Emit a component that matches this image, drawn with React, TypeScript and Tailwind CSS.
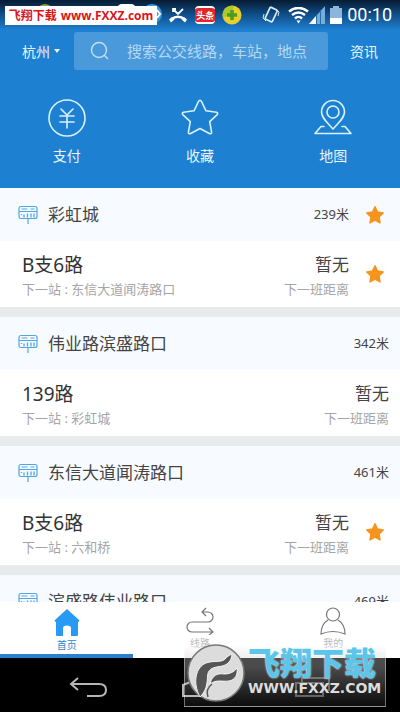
import type { ReactNode } from 'react'

interface Station {
  name: string
  distance: string
  starred: boolean
  line?: { name: string; next: string; starred: boolean }
}

const STATIONS: Station[] = [
  { name: '彩虹城', distance: '239米', starred: true, line: { name: 'B支6路', next: '东信大道闻涛路口', starred: true } },
  { name: '伟业路滨盛路口', distance: '342米', starred: false, line: { name: '139路', next: '彩虹城', starred: false } },
  { name: '东信大道闻涛路口', distance: '461米', starred: false, line: { name: 'B支6路', next: '六和桥', starred: true } },
  { name: '滨盛路伟业路口', distance: '469米', starred: false },
]

// ── Icons ──

function StopIcon() {
  return (
    <svg viewBox="0 0 20 20" className="h-5 w-5 flex-none" fill="none" stroke="#4fa6e6" strokeWidth="1.200">
      <rect x="1" y="1.500" width="18" height="12" rx="2" />
      <path d="M1 6.500h18M3.500 4h6M12.500 4h4M10 13.500V19" />
      <path d="M6 9.500v3M9.500 8.500v4M13 8.500v4M16 8.500v4M3.500 9v1" strokeWidth="1.300" />
    </svg>
  )
}

function StarButton({ label }: { label: string }) {
  return (
    <button type="button" aria-label={label} className="ml-4 h-5 w-5 flex-none">
      <svg viewBox="0 0 20 20" className="h-5 w-5" fill="#f7941d" stroke="#f7941d" strokeWidth="1.500" strokeLinejoin="round">
        <path d="M10 1.800l2.500 5.300 5.700.8-4.200 4.100 1 5.900-5-2.800-5 2.800 1-5.900L1.800 7.900l5.700-.8z" />
      </svg>
    </button>
  )
}

// ── Status bar ──

function StatusBar() {
  return (
    <div className="flex h-[30px] items-center justify-end bg-linear-to-b from-[#061c33] via-[#10508c] via-50% to-[#1e80d1] pr-2 text-white">
      <svg viewBox="0 0 18 16" className="mr-2 h-4 w-[18px]" fill="none" stroke="#fff">
        <path d="M4 5V2h3M4 2l5 5 5-5" strokeWidth="1.800" />
        <path d="M3 12c3-3 9-3 12 0" strokeWidth="2.500" />
        <path d="M0 12.500l3-2.500 2.500 2.500L2 15.500zM18 12.500L15 10l-2.500 2.500 3.500 3z" fill="#fff" stroke="none" />
      </svg>
      <span className="mr-[7px] flex h-[18px] w-5 items-center justify-center rounded-sm border-y-2 border-white bg-[#e32428] text-[9px] leading-none font-bold">头条</span>
      <svg viewBox="0 0 20 20" className="mr-5 h-5 w-5">
        <circle cx="10" cy="10" r="9.500" fill="#e9cf2c" />
        <path d="M1 13A9.500 9.500 0 0 1 12 1c-1 5-5 9-11 12z" fill="#a9c92d" />
        <path d="M10 5v10M5 10h10" stroke="#4c9a20" strokeWidth="3.500" />
      </svg>
      <svg viewBox="0 0 18 18" className="mr-2 h-[18px] w-[18px]" fill="none" stroke="#dceaf6" strokeWidth="1.700">
        <rect x="5" y="2" width="8" height="13" rx="1" transform="rotate(25 9 9)" />
        <path d="M2 8l-1 4 3 3M16 10l1-4-3-3" strokeWidth="1" />
      </svg>
      <svg viewBox="0 0 21 17" className="h-[17px] w-[21px]" fill="none" stroke="#fff" strokeWidth="2.500">
        <path d="M1 4.500c6-4.500 13-4.500 19 0M4 8c4-3 9-3 13 0M7 11.500c2-2 5-2 7 0" />
        <path d="M8.500 13.500h4l-2 3z" fill="#fff" stroke="none" />
      </svg>
      <svg viewBox="0 0 16 18" className="mr-1 h-[18px] w-4">
        <path d="M16 0v18H0z" fill="#78add9" />
        <path d="M7 10.100V18H0z" fill="#fff" />
        <path d="M7.500 9v9M11.500 4v14" stroke="#256eac" />
      </svg>
      <svg viewBox="0 0 14 18" className="mr-1 h-[18px] w-[14px]">
        <path d="M4 0h6v2h3v16H1V2h3z" fill="#8bb5da" />
        <path d="M1 12h12v6H1z" fill="#fff" />
      </svg>
      <span className="font-[Roboto] text-[18px] leading-5">00:10</span>
    </div>
  )
}

// Banner lies over the first notification icons; their edges stay visible
function SiteBanner() {
  return (
    <div className="absolute top-[4px] left-[5px]">
      <svg viewBox="0 0 160 21" className="h-[21px] w-[160px]">
        <circle cx="40" cy="9" r="9" fill="#86a83a" />
        <rect x="112" y="0" width="19" height="18" rx="5" fill="#fff" />
        <circle cx="147" cy="10" r="10" fill="#2f9be0" />
        <path d="M152 6l3 4-3 4" fill="none" stroke="#fff" strokeWidth="2" />
      </svg>
      <div className="absolute top-[2px] left-0 flex h-[19px] w-[152px] items-center justify-center gap-1 bg-white text-[12px] leading-none font-bold text-[#d9151b]">
        <span>飞翔下载</span>
        <span className="font-[Open_Sans]">www.FXXZ.com</span>
      </div>
    </div>
  )
}

// ── Header ──

function Shortcut({ label, children }: { label: string; children: ReactNode }) {
  return (
    <button type="button" className="flex flex-1 flex-col items-center gap-2 text-[14px] leading-5">
      <svg viewBox="0 0 40 40" className="h-10 w-10" fill="none" stroke="#d9f2ff" strokeWidth="1.600" strokeLinecap="round" strokeLinejoin="round">
        {children}
      </svg>
      {label}
    </button>
  )
}

function Header() {
  return (
    <header className="flex-none bg-[#1e80d1] text-[#e8f6ff]">
      <StatusBar />
      <div className="flex items-center pt-[2px] text-[14px]">
        <button type="button" className="flex w-[74px] items-center gap-1 pl-[22px]">
          杭州
          <svg viewBox="0 0 6 4" className="h-1 w-[6px]" fill="#e8f6ff"><path d="M0 0h6L3 4z" /></svg>
        </button>
        <label className="flex h-[38px] flex-1 items-center rounded-[3px] bg-[#4a9adb] pl-4">
          <svg viewBox="0 0 20 20" className="h-5 w-5 flex-none" fill="none" stroke="#c3e0f5" strokeWidth="1.400">
            <circle cx="9" cy="9" r="7.500" />
            <path d="M14.500 14.500l3.500 3.500" />
          </svg>
          <input type="search" aria-label="搜索" placeholder="搜索公交线路，车站，地点" className="ml-[17px] w-full min-w-0 bg-transparent text-[15px] outline-none placeholder:text-[#b4d8f3]" />
        </label>
        <a href="#news" className="w-[72px] text-center">资讯</a>
      </div>
      <nav className="flex pt-7 pb-[22px]">
        <Shortcut label="支付">
          <circle cx="20" cy="20" r="18" />
          <path d="M14 11l6 6 6-6M13 18h14M13 24h14M20 17v13" />
        </Shortcut>
        <Shortcut label="收藏">
          <path d="M18.500 3.500q1.500-2.500 3 0l4.500 9.300 10.500 1.500q2 .7.700 2.300l-7.500 7 1.900 10.600q-.2 2.300-2.300 1.300L20 30.500l-9.300 5q-2.100 1-2.300-1.300l1.900-10.600-7.500-7q-1.300-1.600.7-2.300L14 12.800z" />
        </Shortcut>
        <Shortcut label="地图">
          <path d="M20 31C14 24 8.500 20 8.500 14a11.500 11.500 0 0 1 23 0C31.500 20 26 24 20 31z" />
          <circle cx="20" cy="14" r="6" />
          <path d="M11 28.500H8L2 35.500h36l-6-7h-3" />
        </Shortcut>
      </nav>
    </header>
  )
}

// ── Station list ──

function StationCard({ station }: { station: Station }) {
  const { line } = station
  return (
    <section className="border-b-10 border-[#e7ebec]">
      <div className={`flex h-[53px] items-center bg-[#f7fbff] pl-[18px] ${station.starred ? 'pr-[15px]' : 'pr-[11px]'}`}>
        <StopIcon />
        <h2 className="ml-[10px] flex-1 text-[17px] text-[#444]">{station.name}</h2>
        <span className="text-[13px] text-[#444]">{station.distance}</span>
        {station.starred && <StarButton label="取消收藏车站" />}
      </div>
      {line && (
        <div className={`flex h-[66px] items-center bg-white pl-[22px] ${line.starred ? 'pr-[15px]' : 'pr-[11px]'}`}>
          <div className="flex-1 pt-[6px]">
            <h3 className="text-[19px] leading-6 text-[#333]">{line.name}</h3>
            <p className="text-[13px] leading-6 text-[#a5a5a5]">下一站 : {line.next}</p>
          </div>
          <div className="pt-[6px] text-right">
            <p className="text-[17px] leading-6 text-[#444]">暂无</p>
            <p className="text-[13px] leading-6 text-[#a5a5a5]">下一班距离</p>
          </div>
          {line.starred && <StarButton label="取消收藏线路" />}
        </div>
      )}
    </section>
  )
}

// ── Bottom bars ──

function TabBar() {
  return (
    <nav className="flex h-14 flex-none bg-white text-[10px] leading-4 text-[#bbb]">
      <button type="button" className="flex flex-1 flex-col items-center border-b-4 border-[#2a80cd] pt-[7px] text-[#2b86d0]">
        <svg viewBox="0 0 26 28" className="h-7 w-[26px]" fill="#269af5">
          <path d="M13 0l12.500 11.500-1 1.500H24v13q0 1-1 1h-6v-8q0-2.500-4-2.500T9 19v8H3q-1 0-1-1V13h-.500l-1-1.500z" />
        </svg>
        <span>首页</span>
      </button>
      <button type="button" className="flex flex-1 flex-col items-center pt-[5px]">
        <svg viewBox="0 0 28 28" className="h-7 w-7" fill="none" stroke="#777" strokeWidth="1.200">
          <path d="M20 1l-4 4 4 4M16 5h6a5 5 0 0 1 0 10H6a5 5 0 0 0 0 10h20M23 21l4 4-4 3" />
        </svg>
        <span>线路</span>
      </button>
      <button type="button" className="flex flex-1 flex-col items-center pt-[5px]">
        <svg viewBox="0 0 28 28" className="h-7 w-7" fill="none" stroke="#777" strokeWidth="1.200">
          <circle cx="14" cy="7.500" r="6.500" />
          <path d="M9 13C4 16 2 21 2 27q12-5 24 0c0-6-2-11-7-14" />
        </svg>
        <span>我的</span>
      </button>
    </nav>
  )
}

function SystemBar() {
  return (
    <div className="flex h-[54px] flex-none items-center justify-center gap-[74px] bg-black pt-1">
      <button type="button" aria-label="返回">
        <svg viewBox="0 0 38 20" className="h-5 w-[38px]" fill="none" stroke="#b5b5b5" strokeWidth="2">
          <path d="M9 1L2 7l7 6M2 7h28q7 0 7 6t-7 6H18" />
        </svg>
      </button>
      <button type="button" aria-label="主屏幕">
        <svg viewBox="0 0 38 20" className="h-5 w-[38px]" fill="none" stroke="#b5b5b5" strokeWidth="2">
          <path d="M2 19V8l17-7 17 7v11z" />
        </svg>
      </button>
      <button type="button" aria-label="最近任务">
        <svg viewBox="0 0 38 20" className="h-5 w-[38px]" fill="none" stroke="#555" strokeWidth="2">
          <path d="M9 5V1h27v12h-4M3 6h27v13H3z" />
        </svg>
      </button>
    </div>
  )
}

function Watermark() {
  return (
    <div className="absolute right-[14px] bottom-[5px] flex h-[62px] w-[202px] items-center border border-t-0 border-white/40 bg-linear-to-b from-white/30 via-[#bbb]/40 via-35% to-white/5">
      <svg viewBox="0 0 60 60" className="mb-1 h-[60px] w-[60px] flex-none">
        <circle cx="31" cy="29" r="28" fill="#dcdcdc" stroke="#777" strokeWidth="1.500" />
        <path d="M15 53C7 38 11 23 21 19c9-3 15 0 19-4 2-2 4-4 7-5 0 4-2 8-5 10-4 3-9 2-14 4-7 3-5 9-6 15-1 6-3 10-7 14z" fill="#555" stroke="#f5f5f5" />
        <path d="M25 40c2-9 8-11 14-10 6 0 10-2 13-6 1 7-2 12-8 13-7 1-12-2-19 3z" fill="#555" stroke="#f5f5f5" />
        <path d="M23 53c-2-6 0-10 4-13" fill="none" stroke="#555" strokeWidth="1.500" />
      </svg>
      <div className="mb-[9px] ml-[3px] whitespace-nowrap">
        <p className="text-[32px] leading-[34px] font-black text-[#5cc5ea] [text-shadow:0_0_2px_#fff]">飞翔下载</p>
        <p className="font-[DejaVu_Sans] text-[14px] leading-4 font-bold text-[#ddd]">WWW.FXXZ.COM</p>
      </div>
    </div>
  )
}

export default function App() {
  return (
    <div className="relative flex h-screen flex-col overflow-hidden bg-white font-['Noto_Sans','Noto_Sans_CJK_SC',sans-serif]">
      <Header />
      <main className="min-h-0 flex-1 overflow-hidden">
        {STATIONS.map(s => <StationCard key={s.name} station={s} />)}
      </main>
      <TabBar />
      <SystemBar />
      <SiteBanner />
      <Watermark />
    </div>
  )
}
